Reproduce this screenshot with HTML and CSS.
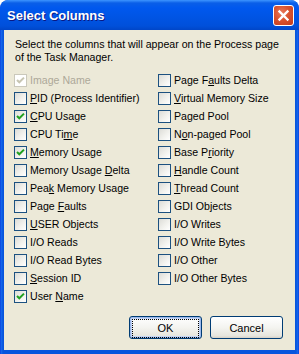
FILE: index.html
```html
<!DOCTYPE html>
<html lang="en">

<head>
    <meta charset="UTF-8">
    <title>Select Columns</title>
    <link rel="stylesheet" href="styles.css">
</head>

<body>
    <div class="window">
        <div class="titlebar">
            <span class="title">Select Columns</span>
            <span class="close">
                <svg width="19" height="19" viewBox="0 0 19 19">
                    <path d="M5.5 5.5 L13.5 13.5 M13.5 5.5 L5.5 13.5" stroke="#fff" stroke-width="2.4" stroke-linecap="square" />
                </svg>
            </span>
        </div>

        <div class="client">
            <p class="intro">Select the columns that will appear on the Process page<br>of the Task Manager.</p>

            <div class="columns">
                <ul class="col">
                    <li class="disabled"><span class="box"><svg width="11" height="11" viewBox="0 0 11 11"><path d="M2 5 L4.3 7.3 L9 2.6" fill="none" stroke="#c7c5b2" stroke-width="2" /></svg></span><span>Image Name</span></li>
                    <li><span class="box"></span><span><u>P</u>ID (Process Identifier)</span></li>
                    <li><span class="box"><svg width="11" height="11" viewBox="0 0 11 11"><path d="M2 5 L4.3 7.3 L9 2.6" fill="none" stroke="#21a121" stroke-width="2" /></svg></span><span><u>C</u>PU Usage</span></li>
                    <li><span class="box"></span><span>CPU Ti<u>m</u>e</span></li>
                    <li><span class="box"><svg width="11" height="11" viewBox="0 0 11 11"><path d="M2 5 L4.3 7.3 L9 2.6" fill="none" stroke="#21a121" stroke-width="2" /></svg></span><span><u>M</u>emory Usage</span></li>
                    <li><span class="box"></span><span>Memory Usage <u>D</u>elta</span></li>
                    <li><span class="box"></span><span>Pea<u>k</u> Memory Usage</span></li>
                    <li><span class="box"></span><span>Page <u>F</u>aults</span></li>
                    <li><span class="box"></span><span><u>U</u>SER Objects</span></li>
                    <li><span class="box"></span><span>I/O Reads</span></li>
                    <li><span class="box"></span><span>I/O Read Bytes</span></li>
                    <li><span class="box"></span><span><u>S</u>ession ID</span></li>
                    <li><span class="box"><svg width="11" height="11" viewBox="0 0 11 11"><path d="M2 5 L4.3 7.3 L9 2.6" fill="none" stroke="#21a121" stroke-width="2" /></svg></span><span>User <u>N</u>ame</span></li>
                </ul>
                <ul class="col">
                    <li><span class="box"></span><span>Page F<u>a</u>ults Delta</span></li>
                    <li><span class="box"></span><span><u>V</u>irtual Memory Size</span></li>
                    <li><span class="box"></span><span>Paged Pool</span></li>
                    <li><span class="box"></span><span>N<u>o</u>n-paged Pool</span></li>
                    <li><span class="box"></span><span>Base P<u>r</u>iority</span></li>
                    <li><span class="box"></span><span><u>H</u>andle Count</span></li>
                    <li><span class="box"></span><span><u>T</u>hread Count</span></li>
                    <li><span class="box"></span><span>GDI Objects</span></li>
                    <li><span class="box"></span><span>I/O Writes</span></li>
                    <li><span class="box"></span><span>I/O Write Bytes</span></li>
                    <li><span class="box"></span><span>I/O Other</span></li>
                    <li><span class="box"></span><span>I/O Other Bytes</span></li>
                </ul>
            </div>

            <div class="buttons">
                <button class="btn default"><span>OK</span></button>
                <button class="btn"><span>Cancel</span></button>
            </div>
        </div>
    </div>
</body>

</html>
```

FILE: styles.css
```css
body {
    margin: 0;
    background: #fff;
    font-family: "Liberation Sans", Arial, sans-serif;
}

.window {
    width: 299px;
    height: 354px;
    display: flex;
    flex-direction: column;
    background: linear-gradient(to right, #0831d9 0, #166aee 1px, #0855dd 3px, #0855dd 296px, #166aee 298px, #0831d9 299px);
    border-radius: 8px 8px 0 0;
    overflow: hidden;
}

.titlebar {
    height: 30px;
    flex: none;
    display: flex;
    align-items: center;
    justify-content: space-between;
    padding: 0 5px 0 7px;
    background: linear-gradient(to bottom, #3d95ff 0, #0a5fe8 3px, #0058ee 8px, #0054e3 18px, #0050da 26px, #0046c8 30px);
    border-radius: 8px 8px 0 0;
}

.title {
    color: #fff;
    font-weight: bold;
    font-size: 13px;
    text-shadow: 1px 1px 0 #0a1883;
    margin-top: 1px;
}

.close {
    width: 19px;
    height: 19px;
    border: 1px solid #fff;
    border-radius: 3px;
    background: radial-gradient(circle at 40% 35%, #e87a5c 0, #d9532f 45%, #c23a1b 100%);
    display: flex;
}

.client {
    flex: 1;
    margin: 0 4px 4px;
    background: #ece9d8;
    font-size: 10.6px;
    color: #000;
    display: flex;
    flex-direction: column;
}

.intro {
    margin: 0;
    padding: 8px 0 0 11px;
    line-height: 13px;
}

.columns {
    display: flex;
    margin-top: 7px;
}

.col {
    list-style: none;
    margin: 0;
    padding: 0 0 0 10px;
    width: 134px;
}

.col li {
    height: 18px;
    display: flex;
    align-items: center;
    white-space: nowrap;
}

.box {
    width: 11px;
    height: 11px;
    flex: none;
    border: 1px solid #1c5180;
    background: linear-gradient(135deg, #dcdcd7 0%, #f3f3ef 60%, #fff 100%);
    margin-right: 3px;
    display: flex;
}

.disabled {
    color: #aca899;
}

.disabled .box {
    border-color: #cac8bb;
    background: #fff;
}

.buttons {
    display: flex;
    justify-content: flex-end;
    gap: 8px;
    margin-top: 11px;
    padding-right: 12px;
}

.btn {
    width: 73px;
    height: 23px;
    padding: 0;
    border: 1px solid #003c74;
    border-radius: 3px;
    background: linear-gradient(to bottom, #fff 0%, #f4f4f0 50%, #e6e5dd 90%, #d6d0c5 100%);
    font-family: "Liberation Sans", Arial, sans-serif;
    font-size: 11px;
    color: #000;
}

.btn.default {
    box-shadow: inset 0 0 0 1px #9db9eb, inset 0 0 0 2px #c4d5f5;
}

.btn.default span {
    display: block;
    margin: 2px;
    height: 17px;
    line-height: 17px;
    border: 1px dotted #000;
}
```
